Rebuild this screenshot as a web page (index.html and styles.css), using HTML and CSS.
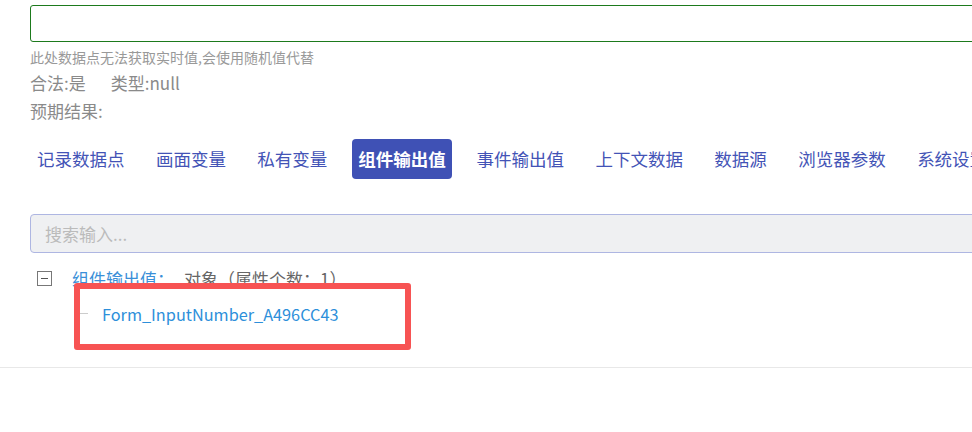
FILE: index.html
```html
<!DOCTYPE html>
<html lang="zh">
<head>
<meta charset="utf-8">
<link rel="stylesheet" href="styles.css">
</head>
<body>
<div class="panel">
  <div class="value-input"></div>
  <div class="hint">此处数据点无法获取实时值,会使用随机值代替</div>
  <div class="meta first"><span class="meta-item">合法:是</span><span class="meta-item">类型:null</span></div>
  <div class="meta">预期结果:</div>
  <div class="tabs">
    <span class="tab">记录数据点</span>
    <span class="tab">画面变量</span>
    <span class="tab">私有变量</span>
    <span class="tab active">组件输出值</span>
    <span class="tab">事件输出值</span>
    <span class="tab">上下文数据</span>
    <span class="tab">数据源</span>
    <span class="tab">浏览器参数</span>
    <span class="tab">系统设置</span>
  </div>
  <div class="search">搜索输入...</div>
  <div class="tree">
    <div class="tree-row">
      <span class="toggle"></span>
      <span class="tree-key">组件输出值：</span>
      <span class="tree-val">对象（属性个数：1）</span>
    </div>
    <div class="tree-row child">
      <span class="connector"></span>
      <span class="tree-leaf">Form_InputNumber_A496CC43</span>
    </div>
    <div class="highlight"></div>
  </div>
</div>
<div class="divider"></div>
</body>
</html>
```
FILE: styles.css
```css
html, body {
  margin: 0;
  padding: 0;
  background: #fff;
  overflow: hidden;
  font-family: "Noto Sans CJK SC", "Noto Sans", sans-serif;
}
.panel {
  width: 1000px;
  padding: 5px 0 36px 30px;
}
.value-input {
  height: 37px;
  box-sizing: border-box;
  border: 1px solid #1d7a1d;
  border-radius: 3px;
}
.hint {
  margin-top: 5px;
  font-size: 14px;
  line-height: 20px;
  color: #999;
}
.meta {
  font-size: 17px;
  line-height: 28px;
  color: #8a8a8a;
}
.meta.first { margin-top: 2px; }
.meta-item + .meta-item { margin-left: 25px; }
.tabs {
  margin-top: 14px;
  display: flex;
  gap: 17.4px;
  white-space: nowrap;
}
.tab {
  height: 40px;
  line-height: 40px;
  padding: 0 7px;
  font-size: 17.5px;
  color: #4353b6;
  border-radius: 4px;
}
.tab.active {
  background: #3f51b5;
  color: #fff;
  font-weight: bold;
  padding: 0 6.5px;
}
.search {
  margin-top: 35px;
  height: 39px;
  box-sizing: border-box;
  border: 1px solid #aeb6e2;
  border-radius: 4px;
  background: #eff0f2;
  padding-left: 14px;
  line-height: 37px;
  font-size: 17px;
  color: #bbb;
}
.tree {
  position: relative;
  margin-top: 8px;
}
.tree-row {
  height: 35px;
  display: flex;
  align-items: center;
  font-size: 17px;
}
.toggle {
  width: 15px;
  height: 15px;
  box-sizing: border-box;
  border: 1px solid #777;
  margin-left: 7px;
  margin-right: 20px;
  position: relative;
}
.toggle::after {
  content: "";
  position: absolute;
  left: 3px;
  right: 3px;
  top: 6px;
  height: 1px;
  background: #555;
}
.tree-key { color: #3a8fd8; }
.tree-val { color: #666; margin-left: 10px; }
.connector {
  width: 8px;
  height: 1px;
  background: #ccc;
  margin-left: 50px;
  margin-right: 14px;
}
.tree-leaf { color: #2d8fda; font-size: 16.3px; }
.highlight {
  position: absolute;
  left: 44px;
  top: 22px;
  width: 337px;
  height: 67px;
  box-sizing: border-box;
  border: 6px solid #f75353;
  border-radius: 3px;
}
.divider {
  height: 1px;
  background: #e8e8e8;
}
```
